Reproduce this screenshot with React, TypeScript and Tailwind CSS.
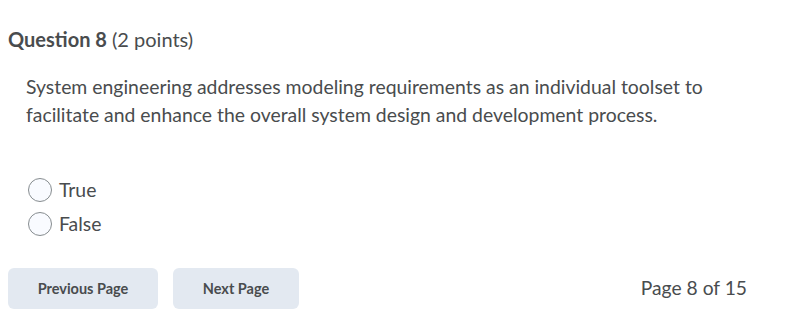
import React from "react";

const Radio = ({ label }: { label: string }) => (
  <label className="flex items-center h-[34px]">
    <span className="w-6 h-6 rounded-full border border-[#868c8f] bg-[#f9fbff] block ml-[28px]" />
    <span className="ml-[7px]">{label}</span>
  </label>
);

const App = () => (
  <div className="w-[796px] h-[316px] bg-white text-[#494c4e] font-['Lato',sans-serif] relative">
    <div className="pt-[26px] pl-[8px] text-[20px] leading-[26px]">
      <span className="font-bold">Question 8</span> (2 points)
    </div>
    <p className="mt-[21px] pl-[26px] text-[19.4px] leading-[28px] w-[740px]">
      System engineering addresses modeling requirements as an individual toolset to facilitate and enhance the
      overall system design and development process.
    </p>
    <div className="mt-[44px] text-[19.4px]">
      <Radio label="True" />
      <Radio label="False" />
    </div>
    <div className="mt-[27px] flex items-center pl-[8px] pr-[49px]">
      <button className="w-[150px] h-[41px] rounded-md bg-[#e3e9f1] text-[14.5px] font-bold">Previous Page</button>
      <button className="ml-[15px] w-[126px] h-[41px] rounded-md bg-[#e3e9f1] text-[14.5px] font-bold">Next Page</button>
      <div className="ml-auto text-[19.25px]">Page 8 of 15</div>
    </div>
  </div>
);

export default App;
